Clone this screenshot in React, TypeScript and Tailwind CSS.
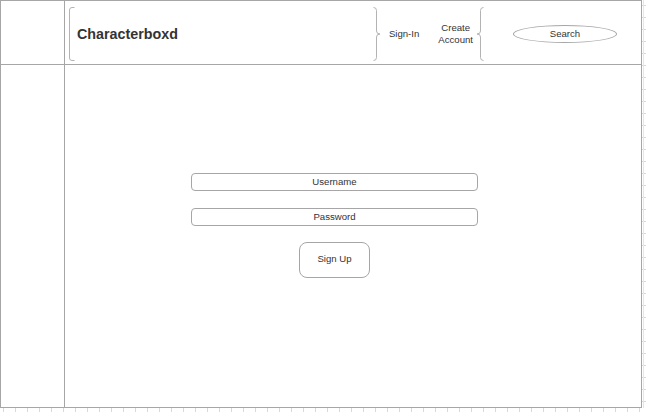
import React from "react";

const font = { fontFamily: '"Liberation Sans", Arial, sans-serif' };

function LeftBracket() {
  return (
    <svg width="6" height="54" viewBox="0 0 6 54" className="shrink-0">
      <path d="M5.5 0.5 H3 Q0.5 0.5 0.5 3 V51 Q0.5 53.5 3 53.5 H5.5" fill="none" stroke="#b3b3b3" strokeWidth="1" />
    </svg>
  );
}

function RightBrace() {
  return (
    <svg width="8" height="54" viewBox="0 0 8 54" className="shrink-0">
      <path d="M0.5 0.5 Q3.5 0.5 3.5 3.5 V24 Q3.5 27 7 27 Q3.5 27 3.5 30 V50.5 Q3.5 53.5 0.5 53.5" fill="none" stroke="#b3b3b3" strokeWidth="1" />
    </svg>
  );
}

function LeftBrace() {
  return (
    <svg width="8" height="54" viewBox="0 0 8 54" className="shrink-0">
      <path d="M7.5 0.5 Q4.5 0.5 4.5 3.5 V24 Q4.5 27 1 27 Q4.5 27 4.5 30 V50.5 Q4.5 53.5 7.5 53.5" fill="none" stroke="#b3b3b3" strokeWidth="1" />
    </svg>
  );
}

function Rulers() {
  const bottom = [];
  for (let x = 3; x < 646; x += 12) bottom.push(x);
  const right = [];
  for (let y = 5; y < 408; y += 12) right.push(y);
  return (
    <svg width="646" height="412" className="absolute left-0 top-0 pointer-events-none">
      {bottom.map((x) => (
        <line key={"b" + x} x1={x + 0.5} y1={408} x2={x + 0.5} y2={412} stroke="#d9d9d9" strokeWidth="1" />
      ))}
      {right.map((y) => (
        <line key={"r" + y} x1={642} y1={y + 0.5} x2={646} y2={y + 0.5} stroke="#d9d9d9" strokeWidth="1" />
      ))}
      <line x1={643.5} y1={0} x2={643.5} y2={408} stroke="#e6e6e6" strokeWidth="1" />
    </svg>
  );
}

export default function App() {
  return (
    <div className="relative w-[646px] h-[412px] bg-white overflow-hidden text-[#333333]" style={font}>
      <Rulers />
      <div className="relative w-[642px] h-[408px] border border-[#a6a6a6] grid grid-cols-[64px_1fr] grid-rows-[64px_1fr]">
        <div className="border-r border-b border-[#a6a6a6]" />
        <div className="border-b border-[#a6a6a6] flex items-center pt-[3px] pr-[24px]">
          <div className="ml-[4px]">
            <LeftBracket />
          </div>
          <div className="ml-[2px] text-[14.3px] font-bold leading-none">Characterboxd</div>
          <div className="ml-auto">
            <RightBrace />
          </div>
          <div className="ml-[8px] text-[9.6px] leading-none">Sign-In</div>
          <div className="ml-[19px] text-[9.6px] leading-[12px] text-center">
            Create
            <br />
            Account
          </div>
          <div className="ml-[3px]">
            <LeftBrace />
          </div>
          <div className="ml-[29px] w-[104px] h-[18px] rounded-[50%] border border-[#a6a6a6] flex items-center justify-center text-[9.6px] leading-none">
            Search
          </div>
        </div>
        <div className="border-r border-[#a6a6a6]" />
        <div className="pl-[126px] pt-[108px] flex flex-col items-start">
          <div className="w-[287px] h-[18px] rounded-[4px] border border-[#a6a6a6] flex items-center justify-center text-[9.6px] leading-none">
            Username
          </div>
          <div className="mt-[17px] w-[287px] h-[18px] rounded-[4px] border border-[#a6a6a6] flex items-center justify-center text-[9.6px] leading-none">
            Password
          </div>
          <div className="mt-[16px] ml-[108px] w-[71px] h-[36px] rounded-[8px] border border-[#a6a6a6] flex items-center justify-center text-[9.6px] leading-none pb-[2px]">
            Sign Up
          </div>
        </div>
      </div>
    </div>
  );
}
